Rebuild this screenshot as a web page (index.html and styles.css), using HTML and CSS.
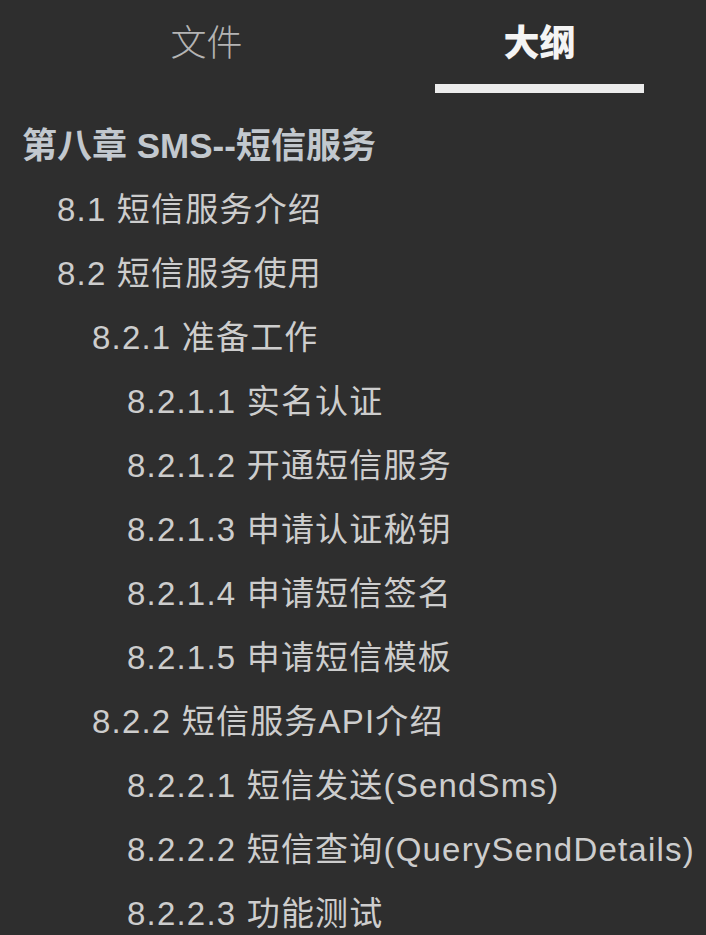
FILE: index.html
```html
<!DOCTYPE html>
<html lang="zh-CN">
<head>
<meta charset="utf-8">
<title>大纲</title>
<link rel="stylesheet" href="styles.css">
</head>
<body>
<div class="panel">
  <div class="tabs">
    <div class="tab"><span class="tab-label">文件</span><span class="tab-bar"></span></div>
    <div class="tab active"><span class="tab-label">大纲</span><span class="tab-bar"></span></div>
  </div>
  <ul class="outline">
    <li class="item lv1">第八章 SMS--短信服务</li>
    <li class="item lv2">8.1 短信服务介绍</li>
    <li class="item lv2">8.2 短信服务使用</li>
    <li class="item lv3">8.2.1 准备工作</li>
    <li class="item lv4">8.2.1.1 实名认证</li>
    <li class="item lv4">8.2.1.2 开通短信服务</li>
    <li class="item lv4">8.2.1.3 申请认证秘钥</li>
    <li class="item lv4">8.2.1.4 申请短信签名</li>
    <li class="item lv4">8.2.1.5 申请短信模板</li>
    <li class="item lv3">8.2.2 短信服务API介绍</li>
    <li class="item lv4">8.2.2.1 短信发送(SendSms)</li>
    <li class="item lv4">8.2.2.2 短信查询(QuerySendDetails)</li>
    <li class="item lv4">8.2.2.3 功能测试</li>
  </ul>
</div>
</body>
</html>
```
FILE: styles.css
```css
html, body {
  margin: 0;
  padding: 0;
  background: #2e2e2e;
}
body {
  font-family: "Liberation Sans", "Noto Sans CJK SC", sans-serif;
  color: #cdcdcd;
  overflow: hidden;
}
.panel {
  width: 706px;
  height: 935px;
}
.tabs {
  display: flex;
  padding-left: 40px;
}
.tab {
  flex: 1;
  display: flex;
  flex-direction: column;
  align-items: center;
}
.tab-label {
  margin-top: 24px;
  height: 40px;
  line-height: 40px;
  font-size: 36px;
  font-weight: 300;
  color: #b4b4b4;
}
.tab-bar {
  margin-top: 20px;
  width: 209px;
  height: 9px;
}
.tab.active .tab-label {
  color: #f4f4f4;
  font-weight: 900;
}
.tab.active .tab-bar {
  background: #ececec;
}
.outline {
  list-style: none;
  margin: 21px 0 0 0;
  padding: 0;
}
.item {
  height: 64px;
  line-height: 64px;
  font-size: 33px;
  letter-spacing: 1.2px;
  white-space: nowrap;
}
.lv1 {
  padding-left: 22px;
  font-size: 35px;
  letter-spacing: 0;
  font-weight: bold;
  color: #c2c8ce;
}
.lv2 { padding-left: 57px; }
.lv3 { padding-left: 92px; }
.lv4 { padding-left: 127px; }
```
